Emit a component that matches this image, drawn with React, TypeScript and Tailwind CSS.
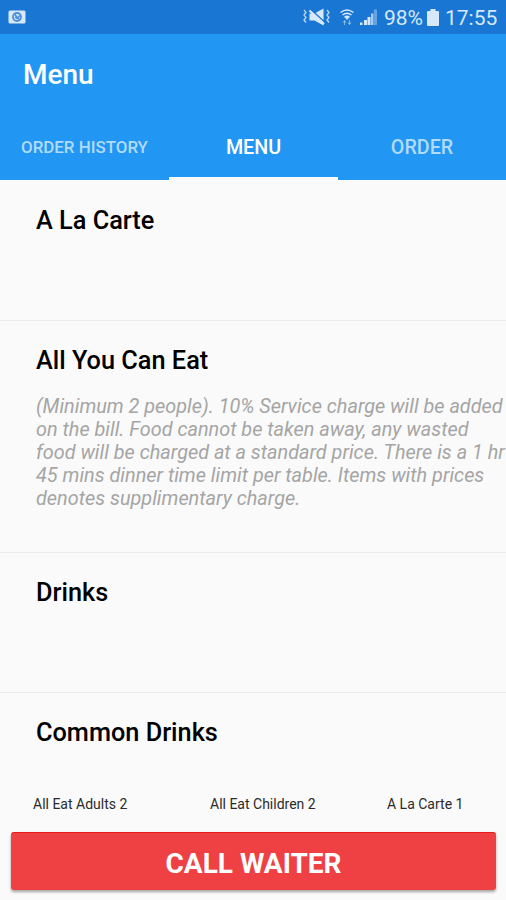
import { useState } from 'react';

interface MenuSection {
  id: number;
  name: string;
  description?: string;
}

const TABS = ['ORDER HISTORY', 'MENU', 'ORDER'];

const SECTIONS: MenuSection[] = [
  { id: 1, name: 'A La Carte' },
  {
    id: 2,
    name: 'All You Can Eat',
    description:
      '(Minimum 2 people). 10% Service charge will be added\non the bill. Food cannot be taken away, any wasted\nfood will be charged at a standard price. There is a 1 hr\n45 mins dinner time limit per table. Items with prices\ndenotes supplimentary charge.',
  },
  { id: 3, name: 'Drinks' },
  { id: 4, name: 'Common Drinks' },
];

export default function App() {
  const [tab, setTab] = useState('MENU');

  return (
    <div className="flex h-[900px] w-[506px] flex-col overflow-hidden bg-[#fafafa] font-['Roboto',sans-serif]">
      <StatusBar />

      <header className="h-[146px] shrink-0 bg-[#2196f3]">
        <h1 className="h-[81px] pl-[23px] pt-[25px] text-[28px] font-medium leading-[32px] text-white">Menu</h1>
        <nav className="grid h-[65px] grid-cols-[169px_169px_168px]">
          {TABS.map(name => (
            <button
              key={name}
              onClick={() => setTab(name)}
              className={`border-b-[3px] pt-[4px] font-medium ${
                name === 'ORDER HISTORY' ? 'text-[16.9px]' : 'text-[19.7px]'
              } ${tab === name ? 'border-[#fafafa] text-white' : 'border-transparent text-[#b1dbfb]'}`}
            >
              {name}
            </button>
          ))}
        </nav>
      </header>

      <main className="min-h-0 flex-1 overflow-hidden">
        {SECTIONS.map(section => (
          <Section key={section.id} section={section} />
        ))}
      </main>

      <footer className="h-[108px] shrink-0 px-[11px]">
        <div className="flex h-[40px] pt-[3px] text-[14px] leading-[18px] text-[#2a2a2a]">
          <span className="w-[177px] pl-[22px]">All Eat Adults 2</span>
          <span className="w-[177px] pl-[22px]">All Eat Children 2</span>
          <span className="pl-[22px]">A La Carte 1</span>
        </div>
        <button className="h-[58px] w-[485px] rounded-[3px] border-t border-[#e51c1c] bg-[#ef4044] pt-[4px] text-[28px] font-bold text-white shadow-[0_2px_3px_rgba(0,0,0,0.35)]">
          CALL WAITER
        </button>
      </footer>
    </div>
  );
}

function Section({ section }: { section: MenuSection }) {
  return (
    <section
      className={`border-b border-[#ececec] pl-[36px] ${
        section.description ? 'h-[232px] pt-[24px]' : 'h-[140px] pt-[24px] first:h-[141px] first:pt-[25px]'
      }`}
    >
      <h2 className="text-[25.3px] font-medium leading-[32px] text-black">{section.name}</h2>
      {section.description && (
        <p className="mt-[18px] whitespace-pre text-[19.85px] italic leading-[23px] text-[#a5a5a5]">
          {section.description}
        </p>
      )}
    </section>
  );
}

function StatusBar() {
  return (
    <div className="flex h-[34px] shrink-0 items-center bg-[#1976d2] pl-[8px] text-[#d6e8fa]">
      <svg width="18" height="14" viewBox="0 0 18 14">
        <rect x="0.5" y="0.5" width="17" height="13" rx="1.5" fill="currentColor" />
        <circle cx="9" cy="7" r="4" fill="none" stroke="#4b8fdc" strokeWidth="1.8" />
        <path d="M6 3.5l6 7M7 7l2 1.500 3-3" fill="none" stroke="#4b8fdc" strokeWidth="1.4" />
      </svg>

      {/* sound off + vibrate */}
      <svg className="ml-[277px]" width="27" height="18" viewBox="0 0 27 18" fill="none" stroke="currentColor">
        <path d="M1 2l2 2.500-2 2.500 2 2.500-2 2.500 2 2.500M24 2l2 2.500-2 2.500 2 2.500-2 2.500 2 2.500" strokeWidth="1.300" opacity="0.85" />
        <path d="M6.500 5.500h5l9-5v17l-9-5h-5z" fill="currentColor" stroke="none" />
        <path d="M8.500 2l13 12" stroke="#1976d2" strokeWidth="1.500" />
        <path d="M6.500 2.500l14.500 13.500" strokeWidth="2" />
      </svg>

      {/* wifi with data arrows */}
      <svg className="ml-[9px]" width="16" height="18" viewBox="0 0 16 18" fill="none" stroke="currentColor">
        <path d="M1.500 4.500q6.500-5 13 0M3.500 7q4.500-3.500 9 0M5.500 9.300q2.500-2 5 0" strokeWidth="1.500" />
        <path d="M8 11.500l-1.500-2h3z" fill="currentColor" />
        <path d="M5.500 17v-4M4 14.500l1.500-2 1.500 2M10.500 12v4M9 14.500l1.500 2 1.500-2" strokeWidth="1" opacity="0.6" />
      </svg>

      <svg className="ml-[5px]" width="18" height="18" viewBox="0 0 18 18" fill="currentColor">
        <path d="M0 14.500h2.500V17H0zM4 12h3v5H4zM7.500 9h3v8h-3z" />
        <path d="M11 5.500h2.500V17H11z" opacity="0.75" />
        <path d="M14 1.500h3V17h-3z" opacity="0.4" />
      </svg>

      <span className="ml-[6px] w-[40px] whitespace-nowrap pt-[2px] text-[21px] leading-[34px]">98%</span>
      <svg className="ml-[3px]" width="12" height="17" viewBox="0 0 12 17" fill="currentColor">
        <path d="M3.500 0h5v2H11q1 0 1 1v13q0 1-1 1H1q-1 0-1-1V3q0-1 1-1h2.500z" />
      </svg>
      <span className="ml-[6px] whitespace-nowrap pt-[2px] text-[21px] leading-[34px]">17:55</span>
    </div>
  );
}
